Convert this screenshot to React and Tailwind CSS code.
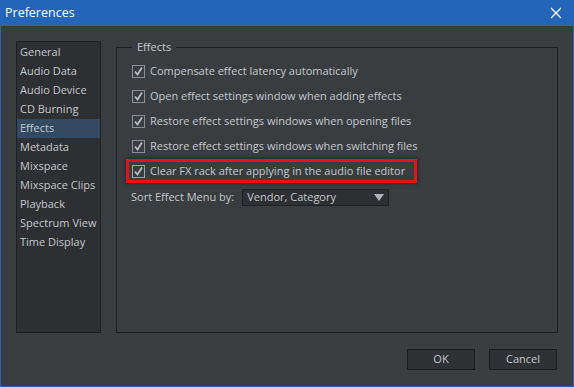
import React from 'react';

const pages = [
  'General',
  'Audio Data',
  'Audio Device',
  'CD Burning',
  'Effects',
  'Metadata',
  'Mixspace',
  'Mixspace Clips',
  'Playback',
  'Spectrum View',
  'Time Display',
];

const options = [
  'Compensate effect latency automatically',
  'Open effect settings window when adding effects',
  'Restore effect settings windows when opening files',
  'Restore effect settings windows when switching files',
];

const CheckBox = ({ border = 'border-[#8b9096]' }) => (
  <span className={'flex h-[13px] w-[13px] shrink-0 items-center justify-center border bg-[#3a3d40] ' + border}>
    <svg width="11" height="11" viewBox="0 0 11 11">
      <path d="M2 5.5 L4.5 8.5 L9 1.5" fill="none" stroke="#b9bdc2" strokeWidth="1.8" />
    </svg>
  </span>
);

const Option = ({ label }) => (
  <div className="flex h-[25px] items-center gap-[5px] pl-[15px]">
    <CheckBox />
    <span>{label}</span>
  </div>
);

export default function App() {
  return (
    <div
      className="flex h-[387px] w-[574px] flex-col whitespace-nowrap bg-[#2365b8] text-[11px] text-[#c3c7cb]"
      style={{ fontFamily: '"Open Sans", "Noto Sans", sans-serif' }}
    >
      {/* title bar */}
      <div className="flex h-[26px] shrink-0 items-center justify-between pl-[5px] pr-[12px] text-[12.5px] text-white">
        <span>Preferences</span>
        <svg width="12" height="12" viewBox="0 0 12 12">
          <path d="M1 1 L11 11 M11 1 L1 11" stroke="#ffffff" strokeWidth="1.3" />
        </svg>
      </div>

      <div className="mx-[1px] mb-[1px] flex flex-1 flex-col bg-[#3a3d40] px-[15px] pt-[15px]">
        <div className="flex h-[292px] gap-[15px]">
          {/* category list */}
          <div className="w-[85px] shrink-0 border border-[#1f2023] bg-[#2e2f32] pt-[1px]">
            {pages.map(p => (
              <div
                key={p}
                className={
                  p === 'Effects'
                    ? 'flex h-[19px] items-center bg-[#334a61] pl-[3px]'
                    : 'flex h-[19px] items-center pl-[3px]'
                }
              >
                {p}
              </div>
            ))}
          </div>

          {/* group box */}
          <div className="relative mt-[6px] flex-1 border border-[#1f2023] pt-[11px]">
            <span className="absolute left-[15px] top-[-9px] bg-[#3a3d40] px-[5px] leading-[16px]">Effects</span>
            {options.map(o => (
              <Option key={o} label={o} />
            ))}
            <div className="ml-[9px] mr-[140px] border-[3px] border-[#e8101a] shadow-[0_0_4px_rgba(0,0,0,0.5)]">
              <div className="flex h-[18px] items-center gap-[5px] pl-[3px]">
                <CheckBox border="border-[#9aa4ae]" />
                <span>Clear FX rack after applying in the audio file editor</span>
              </div>
            </div>
            <div className="mt-[6px] flex items-center gap-[8px] pl-[14px]">
              <span>Sort Effect Menu by:</span>
              <div className="flex h-[17px] w-[147px] items-center justify-between border border-[#1f2023] bg-[#2e2f32] pl-[4px] pr-[4px]">
                <span>Vendor, Category</span>
                <svg width="10" height="7" viewBox="0 0 10 7">
                  <path d="M0 0 L10 0 L5 7 Z" fill="#aeb3b8" />
                </svg>
              </div>
            </div>
          </div>
        </div>

        {/* buttons */}
        <div className="mt-[16px] flex justify-end gap-[14px] pr-[1px]">
          <button className="h-[21px] w-[68px] border border-[#1b1c1e] bg-[#2f3134] text-[#c3c7cb]">OK</button>
          <button className="h-[21px] w-[68px] border border-[#1b1c1e] bg-[#2f3134] text-[#c3c7cb]">Cancel</button>
        </div>
      </div>
    </div>
  );
}
